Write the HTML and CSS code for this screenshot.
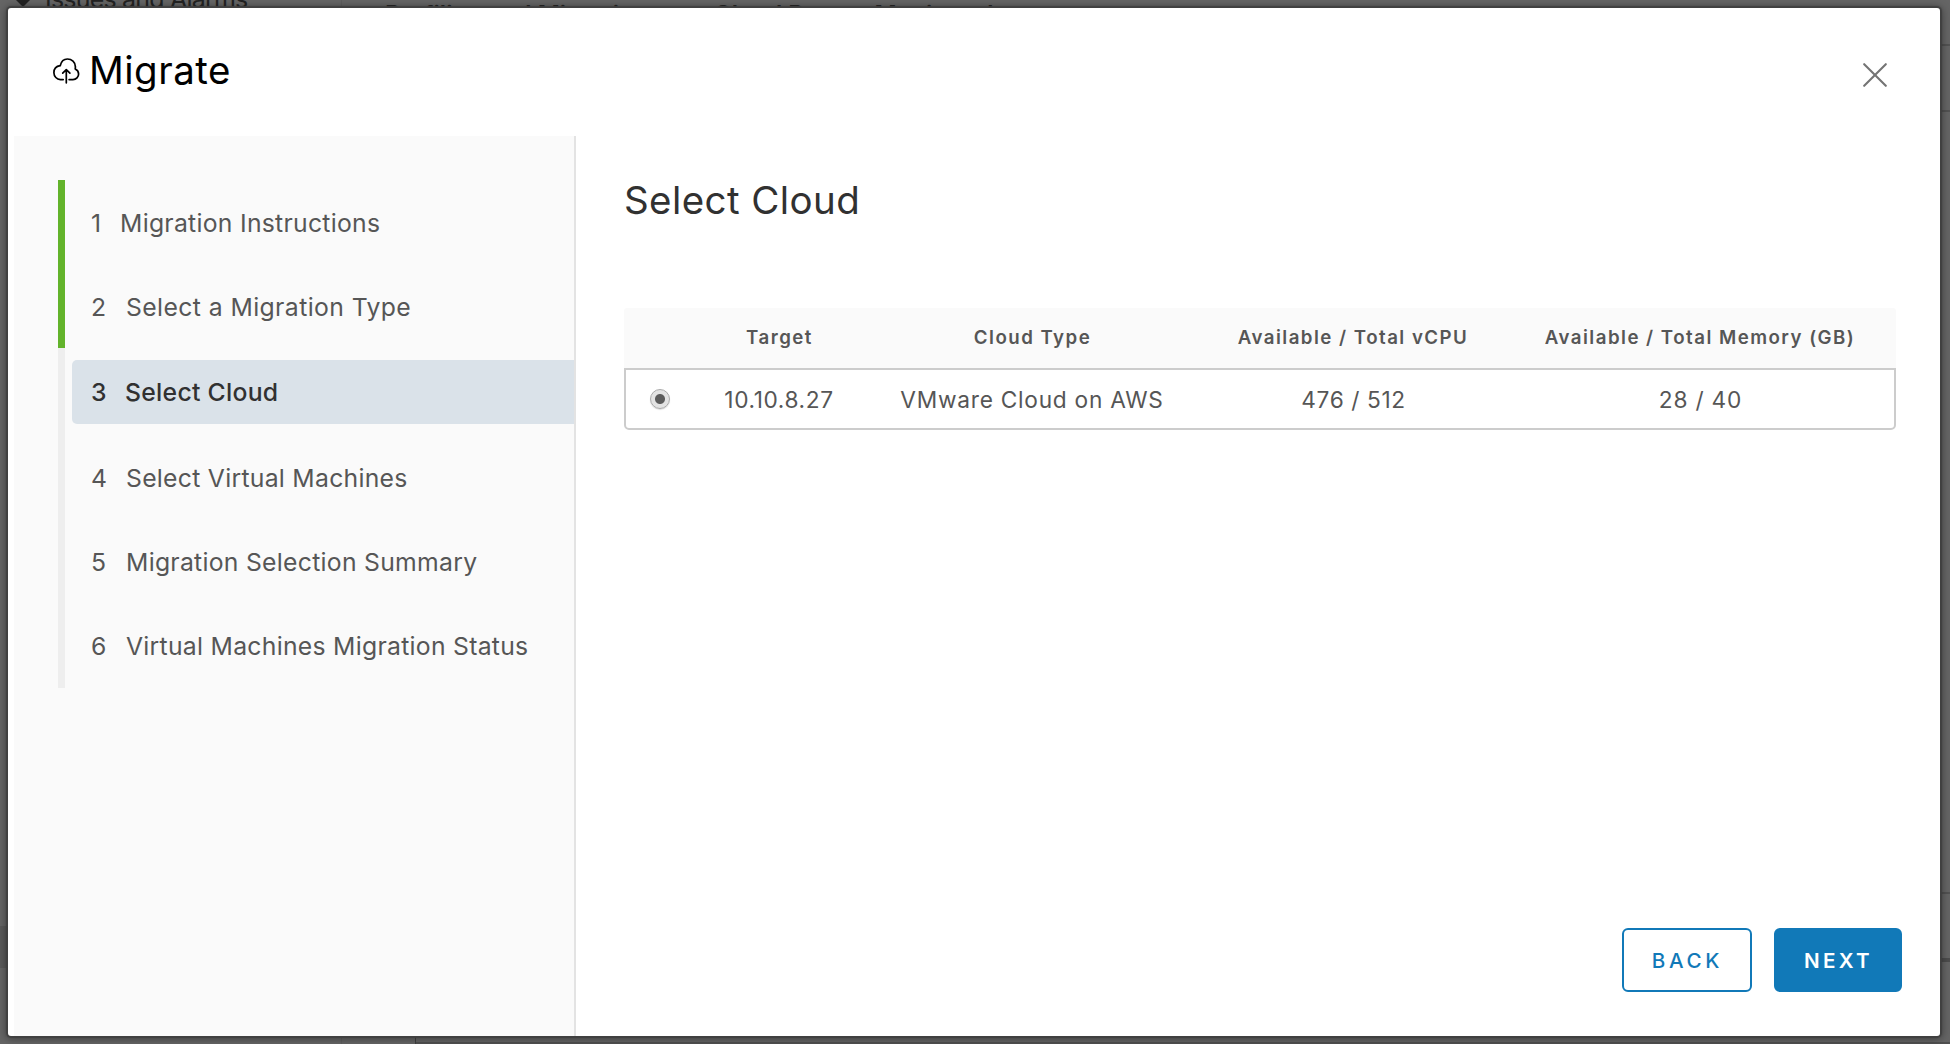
FILE: index.html
```html
<!DOCTYPE html>
<html lang="en">
<head>
<meta charset="utf-8">
<title>Migrate</title>
<link rel="stylesheet" href="styles.css">
</head>
<body>
<div class="page" aria-hidden="true">
  <div class="tree"><span class="caret"></span><span class="tree-label">Issues and Alarms</span></div>
  <div class="cell cell-first">Profiling and Migration</div>
  <div class="cell">Cloud Routes Monitored</div>
</div>
<div class="modal" role="dialog">
  <header class="modal-header">
    <svg class="cloud" viewBox="0 0 28 28" width="28" height="28" fill="none" stroke="#000" stroke-width="1.7" stroke-linecap="round" stroke-linejoin="round">
      <path d="M11.2 22.6H8.4A6.9 6.9 0 0 1 1.9 15.8C1.9 11.9 4.6 9.2 8.2 8.7C9.2 4.4 11.9 2 15.4 2C20 2 23.1 5.2 23.3 9.2C23.5 10.4 23.4 11.2 23.2 11.9C25.4 12.9 26.6 14.6 26.6 16.9C26.6 20 24.2 22.6 21 22.6H17.1"/>
      <path d="M14.3 25.8V12.8M10.7 16.1L14.3 12.6L17.9 16.1"/>
    </svg>
    <h1 class="title">Migrate</h1>
    <button class="close" aria-label="Close">
      <svg viewBox="0 0 24 24" width="24" height="24" stroke="#747474" stroke-width="2.1" stroke-linecap="round"><path d="M1.2 1.2L22.8 22.8M22.8 1.2L1.2 22.8"/></svg>
    </button>
  </header>
  <div class="modal-main">
    <nav class="sidebar">
      <ol class="steps">
        <li class="step done"><span class="label first"><span class="num">1</span>Migration Instructions</span></li>
        <li class="step done"><span class="label second"><span class="num">2</span>Select a Migration Type</span></li>
        <li class="step current"><span class="label"><span class="num">3</span>Select Cloud</span></li>
        <li class="step"><span class="label"><span class="num">4</span>Select Virtual Machines</span></li>
        <li class="step"><span class="label"><span class="num">5</span>Migration Selection Summary</span></li>
        <li class="step"><span class="label"><span class="num">6</span>Virtual Machines Migration Status</span></li>
      </ol>
    </nav>
    <main class="content">
      <h2 class="subtitle">Select Cloud</h2>
      <div class="grid">
        <div class="row head"><span></span><span>Target</span><span>Cloud Type</span><span>Available / Total vCPU</span><span>Available / Total Memory (GB)</span></div>
        <div class="row body"><span class="radio-cell"><i class="radio"></i></span><span>10.10.8.27</span><span class="type">VMware Cloud on AWS</span><span class="cpu">476 / 512</span><span class="memory">28 / 40</span></div>
      </div>
      <footer class="actions">
        <button class="btn">BACK</button>
        <button class="btn primary">NEXT</button>
      </footer>
    </main>
  </div>
</div>
</body>
</html>
```
FILE: styles.css
```css
* { box-sizing: border-box; }

body {
  margin: 0;
  width: 1950px;
  height: 1044px;
  overflow: hidden;
  background: #656565;
  font-family: Inter, "Liberation Sans", sans-serif;
  color: #565656;
}

button { font: inherit; padding: 0; }

.page {
  display: flex;
  height: 1044px;
  overflow: hidden;
  color: #222;
  background:
    linear-gradient(#525252, #525252) 1940px 44px / 10px 2px no-repeat,
    linear-gradient(#525252, #525252) 1940px 110px / 10px 2px no-repeat,
    linear-gradient(#525252, #525252) 1940px 892px / 10px 2px no-repeat,
    linear-gradient(#4c4c4c, #4c4c4c) 1940px 958px / 10px 4px no-repeat,
    linear-gradient(#5a5a5a, #5a5a5a) 0 926px / 14px 42px no-repeat,
    linear-gradient(#404040, #404040) 415px 1036px / 1px 8px no-repeat,
    linear-gradient(#505050, #505050) 415px 1042px / 1535px 2px no-repeat,
    linear-gradient(#5e5e5e, #5e5e5e) 341px 0 / 1px 1044px no-repeat,
    #656565;
}

.tree { display: flex; width: 385px; font-size: 25px; line-height: 30px; letter-spacing: -.8px; margin-top: -16px; }
.caret { width: 16px; height: 8px; margin: 15px 0 0 15px; background: #222; clip-path: polygon(0 0, 100% 0, 50% 100%); }
.tree-label { margin-left: 14px; }
.cell { font-size: 24px; font-weight: 600; line-height: 30px; white-space: nowrap; }
.cell-first { width: 329px; }

.modal {
  position: absolute;
  left: 8px;
  top: 8px;
  width: 1932px;
  height: 1028px;
  display: flex;
  flex-direction: column;
  background: #fff;
  border-radius: 3px;
  box-shadow: 0 0 1px 2px #404040, 0 1px 8px 2px rgba(0, 0, 0, .4);
}

.modal-header { height: 128px; display: flex; align-items: flex-start; padding: 0 53px 0 44px; }
.cloud { margin-top: 49px; }
.title { margin: 38px auto 0 9px; font-size: 38.5px; line-height: 48px; font-weight: 400; letter-spacing: .5px; color: #000; }
.close { display: flex; margin-top: 55px; border: 0; background: none; }

.modal-main { flex: 1; display: flex; padding-left: 6px; }
.sidebar { width: 562px; padding: 44px 0 0 44px; background: #fafafa; border-right: 2px solid #e3e3e3; }

.steps { margin: 0; padding: 0; list-style: none; font-size: 24.75px; letter-spacing: .27px; }
.step { height: 84px; display: flex; align-items: center; padding-left: 7px; border-left: 7px solid #eee; }
.step.done { border-color: #62b32b; }
.label { flex: 1; height: 64px; display: flex; align-items: center; padding-left: 19px; white-space: nowrap; }
.done .label { padding-top: 2px; }
.num { width: 35px; letter-spacing: 0; }
.first .num { width: 29px; }
.second { letter-spacing: .4px; }
.step.current { height: 88px; }
.current .label { background: #dae2e9; border-radius: 5px 0 0 5px; font-weight: 500; color: #313131; padding-bottom: 1px; }
.current .num { width: 34px; }

.content { flex: 1; display: flex; flex-direction: column; padding: 40px 44px 44px 48px; }
.subtitle { margin: 0; font-size: 38.5px; line-height: 48px; font-weight: 400; letter-spacing: .42px; color: #313131; }

.grid { margin-top: 84px; }
.row { display: grid; grid-template-columns: 72px 166px 340px 301px 393px; align-items: center; text-align: center; }
.head { height: 60px; padding-bottom: 2px; background: #fafafa; border-radius: 3px 3px 0 0; font-size: 18.7px; font-weight: 600; letter-spacing: 1.47px; }
.head span { padding-left: 1px; }
.body { height: 62px; border: 2px solid #ccc; border-radius: 0 0 5px 5px; font-size: 22.7px; letter-spacing: .6px; grid-template-columns: 70px 166px 340px 301px 391px; }
.type { letter-spacing: .74px; }
.cpu { padding-left: 2px; }
.memory { padding-left: 4px; letter-spacing: .8px; }
.radio-cell { display: flex; justify-content: center; padding-right: 2px; }
.radio { width: 20px; height: 20px; border: 1.5px solid #aaa; border-radius: 50%; background: radial-gradient(circle, #5c5c5c 4.5px, #e3e3e3 5.5px); box-shadow: 0 1px 1px #ddd; }

.actions { display: flex; justify-content: flex-end; gap: 22px; margin-top: auto; margin-right: -6px; }
.btn { width: 130px; height: 64px; padding-left: 1px; border: 2px solid #1179b8; border-radius: 6px; background: #fff; color: #1179b8; font-size: 20.6px; font-weight: 500; letter-spacing: 3.7px; }
.primary { width: 128px; background: #1179b8; color: #fff; font-weight: 600; letter-spacing: 3.3px; }
```
